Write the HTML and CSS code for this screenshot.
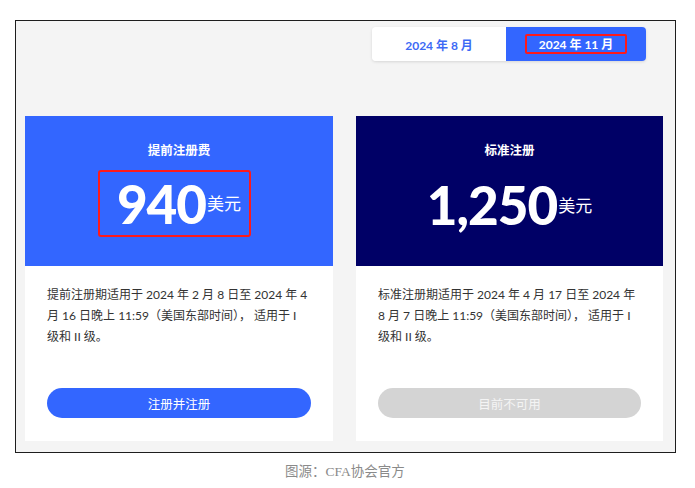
FILE: index.html
```html
<!DOCTYPE html>
<html lang="zh">
<head>
<meta charset="utf-8">
<link rel="stylesheet" href="styles.css">
</head>
<body>
<div class="frame">
  <div class="tabs-row">
    <div class="tabs">
      <div class="tab">2024 年 8 月</div>
      <div class="tab tab-active"><span class="mark">2024 年 11 月</span></div>
    </div>
  </div>
  <div class="cards">
    <div class="card">
      <div class="card-head head-blue">
        <div class="card-title">提前注册费</div>
        <div class="price mark-box"><span class="amount">940</span><span class="unit">美元</span></div>
      </div>
      <div class="card-body">
        <p class="desc">提前注册期适用于 2024 年 2 月 8 日至 2024 年 4<br>月 16 日晚上 11:59（美国东部时间）， 适用于 I<br>级和 II 级。</p>
        <div class="btn">注册并注册</div>
      </div>
    </div>
    <div class="card">
      <div class="card-head head-navy">
        <div class="card-title">标准注册</div>
        <div class="price"><span class="amount">1,250</span><span class="unit">美元</span></div>
      </div>
      <div class="card-body">
        <p class="desc">标准注册期适用于 2024 年 4 月 17 日至 2024 年<br>8 月 7 日晚上 11:59（美国东部时间）， 适用于 I<br>级和 II 级。</p>
        <div class="btn btn-disabled">目前不可用</div>
      </div>
    </div>
  </div>
</div>
<div class="caption">图源：CFA协会官方</div>
</body>
</html>
```

FILE: styles.css
```css
* { box-sizing: border-box; }
html, body { margin: 0; padding: 0; background: #ffffff; }
body {
  font-family: Lato, "Noto Sans CJK SC", sans-serif;
}
.frame {
  margin: 20px 0 0 15px;
  width: 661px;
  height: 433px;
  border: 1px solid #1e1e1e;
  background: #f4f4f4;
  padding: 6px 11px 10px 9px;
  display: flex;
  flex-direction: column;
}
.tabs-row {
  display: flex;
  justify-content: flex-end;
  padding-right: 18px;
}
.tabs {
  display: flex;
  height: 34px;
  border-radius: 4px;
  box-shadow: 0 1px 3px rgba(0,0,0,0.12);
  overflow: hidden;
}
.tab {
  width: 134px;
  display: flex;
  align-items: center;
  justify-content: center;
  background: #ffffff;
  color: #3d6af5;
  font-weight: 700;
  font-size: 12px;
}
.tab-active {
  width: 140px;
  background: #3366ff;
  color: #ffffff;
}
.mark {
  display: inline-block;
  border: 2px solid #ff1a1a;
  border-radius: 2px;
  padding: 1px 12px 0 12px;
  line-height: 15px;
}
.cards {
  margin-top: 55px;
  display: grid;
  grid-template-columns: 308px 307px;
  column-gap: 23px;
  height: 325px;
}
.card {
  display: flex;
  flex-direction: column;
  background: #ffffff;
}
.card-head {
  height: 150px;
  display: flex;
  flex-direction: column;
  align-items: center;
  color: #ffffff;
  padding-top: 27px;
}
.head-blue { background: #3366ff; }
.head-navy { background: #000066; }
.card-title {
  font-size: 12.5px;
  font-weight: 700;
  line-height: 16px;
}
.price {
  margin-top: 16px;
  display: flex;
  align-items: center;
  height: 60px;
}
.mark-box {
  margin-top: 11px;
  margin-right: 9px;
  border: 2px solid #ff1a1a;
  border-radius: 3px;
  padding: 0 8px 0 17px;
  height: 67px;
}
.amount {
  font-size: 53px;
  font-weight: 900;
  letter-spacing: -1px;
  line-height: 60px;
}
.unit {
  font-size: 17px;
  margin-left: 1px;
  margin-top: -2px;
}
.card-body {
  flex: 1;
  display: flex;
  flex-direction: column;
  padding: 18px 22px 23px 22px;
}
.desc {
  margin: 0;
  font-size: 12px;
  line-height: 21px;
  color: #333333;
  white-space: nowrap;
}
.btn {
  margin-top: auto;
  height: 30px;
  border-radius: 15px;
  background: #3366ff;
  color: #ffffff;
  font-size: 12.5px;
  display: flex;
  align-items: center;
  justify-content: center;
}
.btn-disabled {
  background: #d4d4d4;
  color: #f4f4f4;
}
.caption {
  margin-top: 7px;
  width: 690px;
  text-align: center;
  font-family: "Liberation Serif", "Noto Sans CJK SC", serif;
  font-size: 13.5px;
  color: #8a8a8a;
}
```
